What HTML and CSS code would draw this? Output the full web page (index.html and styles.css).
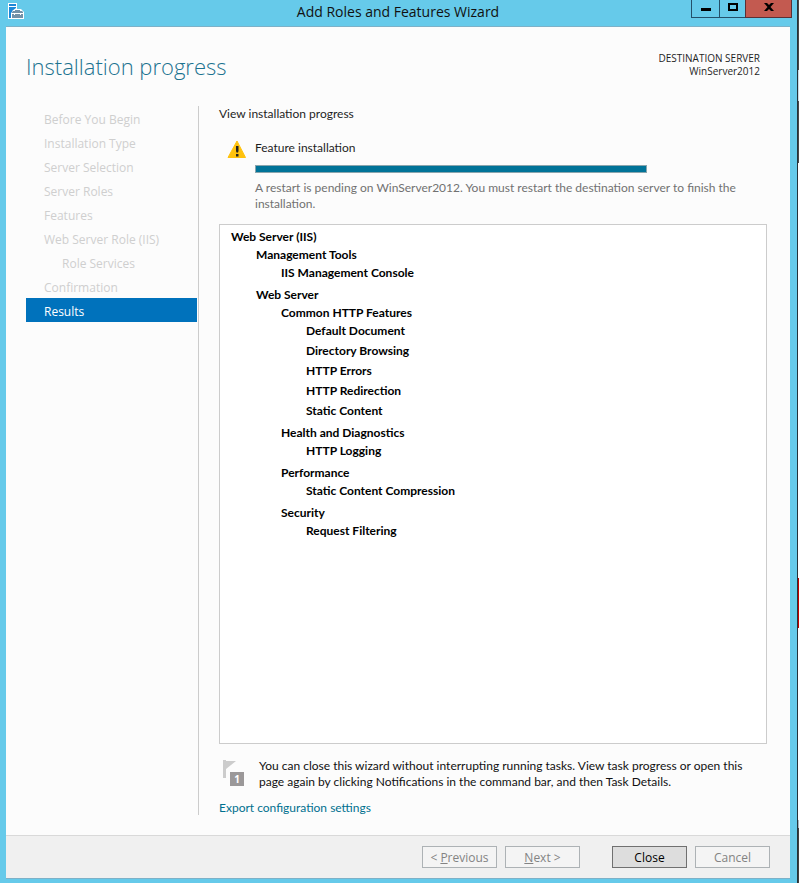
FILE: index.html
```html
<!DOCTYPE html>
<html lang="en">
<head>
<meta charset="utf-8">
<title>Add Roles and Features Wizard</title>
<link rel="stylesheet" href="styles.css">
</head>
<body>
<div class="window">
  <header class="titlebar">
    <svg class="app-icon" width="16" height="16" viewBox="0 0 16 16" aria-hidden="true">
      <path d="M0 0h9v6h4l3 3v7H0z" fill="#fff"/>
      <path d="M1 1h7v2H1zM1 4h7v1L4 8v1L3 10v5H1z" fill="#1e88d8"/>
      <path d="M4 9l1-1h9l1 1v6H4z" fill="#7391a8"/>
      <path d="M7 7h5v1H7zM4 10h11v1H4zM6 11h1v1H6zM12 11h1v1h-1z" fill="#fff"/>
      <path d="M7 7h5v1H7z" fill="#7391a8"/>
    </svg>
    <h1 class="title">Add Roles and Features Wizard</h1>
    <div class="caption">
      <button class="cap min" aria-label="Minimize"><svg width="10" height="8" viewBox="0 0 10 8"><path d="M0 5h10v3H0z"/></svg></button>
      <button class="cap max" aria-label="Maximize"><svg width="10" height="8" viewBox="0 0 10 8"><path d="M0 0h10v8H0zM2 2v4h6V2z" fill-rule="evenodd"/></svg></button>
      <button class="cap exit" aria-label="Close window"><svg width="10" height="8" viewBox="0 0 10 8"><path d="M0 0h3l2 2 2-2h3L6.500 4 10 8H7L5 6 3 8H0l3.500-4z"/></svg></button>
    </div>
  </header>
  <div class="client">
    <div class="heading">
      <h2>Installation progress</h2>
      <p class="server">DESTINATION SERVER<br>WinServer2012</p>
    </div>
    <div class="body">
      <nav class="steps">
        <ol>
          <li>Before You Begin</li>
          <li>Installation Type</li>
          <li>Server Selection</li>
          <li>Server Roles</li>
          <li>Features</li>
          <li>Web Server Role (IIS)</li>
          <li class="sub">Role Services</li>
          <li>Confirmation</li>
          <li class="current" aria-current="step">Results</li>
        </ol>
      </nav>
      <main class="content">
        <p class="lead">View installation progress</p>
        <section class="status">
          <svg class="warn" width="20" height="18" viewBox="0 0 20 18" aria-hidden="true">
            <path d="M10 1 18.500 17.500H1z" fill="#ffc20e" stroke="#ffc20e" stroke-linejoin="round"/>
            <path d="M9 6h2.500v5l-.5 1.500H9.500L9 11zM9 14h2.500v2.500H9z" fill="#222"/>
          </svg>
          <div class="status-text">
            <p>Feature installation</p>
            <div class="bar" role="progressbar" aria-label="Feature installation" aria-valuenow="100"></div>
            <p class="note">A restart is pending on WinServer2012. You must restart the destination server to finish the installation.</p>
          </div>
        </section>
        <div class="tree">
          <ul>
            <li>Web Server (IIS)
              <ul>
                <li>Management Tools
                  <ul><li>IIS Management Console</li></ul>
                </li>
                <li>Web Server
                  <ul>
                    <li>Common HTTP Features
                      <ul>
                        <li>Default Document</li>
                        <li>Directory Browsing</li>
                        <li>HTTP Errors</li>
                        <li>HTTP Redirection</li>
                        <li>Static Content</li>
                      </ul>
                    </li>
                    <li>Health and Diagnostics
                      <ul><li>HTTP Logging</li></ul>
                    </li>
                    <li>Performance
                      <ul><li>Static Content Compression</li></ul>
                    </li>
                    <li>Security
                      <ul><li>Request Filtering</li></ul>
                    </li>
                  </ul>
                </li>
              </ul>
            </li>
          </ul>
        </div>
        <div class="hint">
          <svg class="flag" width="22" height="26" viewBox="0 0 22 26" aria-hidden="true">
            <path d="M0 0h3v18H0zM3 1h10L3 9z" fill="#ccc"/>
            <path d="M7 12h14v14H7z" fill="#9b9899"/>
            <text class="flag-count" x="14" y="23" text-anchor="middle">1</text>
          </svg>
          <p>You can close this wizard without interrupting running tasks. View task progress or open this page again by clicking Notifications in the command bar, and then Task Details.</p>
        </div>
        <a class="export" href="#">Export configuration settings</a>
      </main>
    </div>
    <footer class="actions">
      <button class="btn" disabled>&lt; <u>P</u>revious</button>
      <button class="btn" disabled><u>N</u>ext &gt;</button>
      <button class="btn primary">Close</button>
      <button class="btn" disabled>Cancel</button>
    </footer>
  </div>
</div>
<div class="behind" aria-hidden="true"></div>
</body>
</html>
```

FILE: styles.css
```css
* { box-sizing: border-box; }
body {
  margin: 0;
  min-height: 100vh;
  display: flex;
  font: 12px/16px "Open Sans", "Noto Sans", sans-serif;
  color: #1e1e1e;
}
h1, h2, p, ul, ol { margin: 0; padding: 0; }
h1, h2 { font-weight: 400; }
ul, ol { list-style: none; }
button { font: inherit; }

.window {
  flex: 1;
  display: flex;
  flex-direction: column;
  padding: 0 7px 4px 6px;
  background: #66caea;
}
.titlebar {
  display: grid;
  grid-template-columns: 100px 1fr 100px;
  height: 26px;
}
.app-icon { margin: 3px 0 0 2px; }
.title {
  font-size: 14px;
  line-height: 24px;
  text-align: center;
  color: #111;
}
.caption {
  display: flex;
  justify-self: end;
  height: 18px;
  margin-right: -2px;
}
.cap {
  display: flex;
  justify-content: center;
  align-items: flex-start;
  width: 28px;
  padding: 3px 0 0;
  border: 1px solid #24506a;
  border-width: 0 0 1px 1px;
  background: transparent;
}
.max { width: 26px; }
.exit {
  width: 47px;
  border-right-width: 1px;
  border-color: #5a3036;
  background: #c35a50;
}

.client {
  flex: 1;
  display: flex;
  flex-direction: column;
  border-top: 1px solid #7db1c8;
  border-bottom: 1px solid #7db1c8;
  background: #fcfcfc;
}
.heading {
  display: flex;
  justify-content: space-between;
  height: 79px;
  padding: 24px 30px 0 20px;
}
.heading h2 {
  font-size: 22px;
  line-height: 30px;
  font-weight: 300;
  color: #1c7390;
}
.server {
  padding-top: 1px;
  font-size: 10px;
  line-height: 13px;
  text-align: right;
}
.body {
  flex: 1;
  display: flex;
  padding: 0 23px 20px 20px;
}
.steps {
  width: 173px;
  padding-right: 1px;
  border-right: 1px solid #ccc;
}
.steps li {
  height: 24px;
  padding-left: 18px;
  line-height: 28px;
  color: #cfcfcf;
}
.steps .sub { padding-left: 36px; }
.steps .current { background: #0072bc; color: #fff; }

.content {
  flex: 1;
  display: flex;
  flex-direction: column;
  padding-left: 20px;
  font-family: Lato, "Open Sans", sans-serif;
}
.status { display: flex; padding: 18px 20px 12px 8px; }
.warn { flex: none; margin-right: 8px; }
.bar {
  width: 392px;
  max-width: 100%;
  height: 8px;
  margin: 9px 0 7px;
  border: 1px solid #8aa5ad;
  background: #007398;
}
.note { color: #717171; }
.tree {
  flex: 1;
  padding: 3px 11px;
  border: 1px solid #ccc;
  background: #fff;
  font-weight: 700;
  line-height: 18px;
  color: #000;
}
.tree li { padding-bottom: 2px; }
.tree li ul { padding-left: 25px; }
.hint { display: flex; padding: 14px 12px 10px 4px; color: #111; }
.flag { flex: none; margin: 2px 14px 0 0; }
.flag-count { font: 700 10px "Open Sans", sans-serif; fill: #fff; }
.export {
  align-self: flex-start;
  margin-bottom: -1px;
  color: #00708f;
  text-decoration: none;
}

.actions {
  display: flex;
  justify-content: flex-end;
  gap: 8px;
  padding: 10px 20px;
  border-top: 1px solid #d9d9d9;
  background: #f0f0f0;
}
.btn {
  width: 75px;
  height: 22px;
  padding: 0;
  border: 1px solid #adb2b5;
  background: #f4f4f4;
  line-height: 22px;
  color: #838383;
}
.primary {
  margin: 0 0 0 24px;
  border-color: #707070;
  background: #ddd;
  color: #000;
}

/* Sliver of the desktop that shows past the window's right edge */
.behind {
  width: 2px;
  border-left: 1px solid #263238;
  background: linear-gradient(
    #484848 70px, #c8dce4 70px 101px, #484848 101px 163px,
    #fff 163px 578px, #c00000 578px 628px, #fff 628px 820px,
    #a8b8c0 820px 828px, #404040 828px);
}
```
